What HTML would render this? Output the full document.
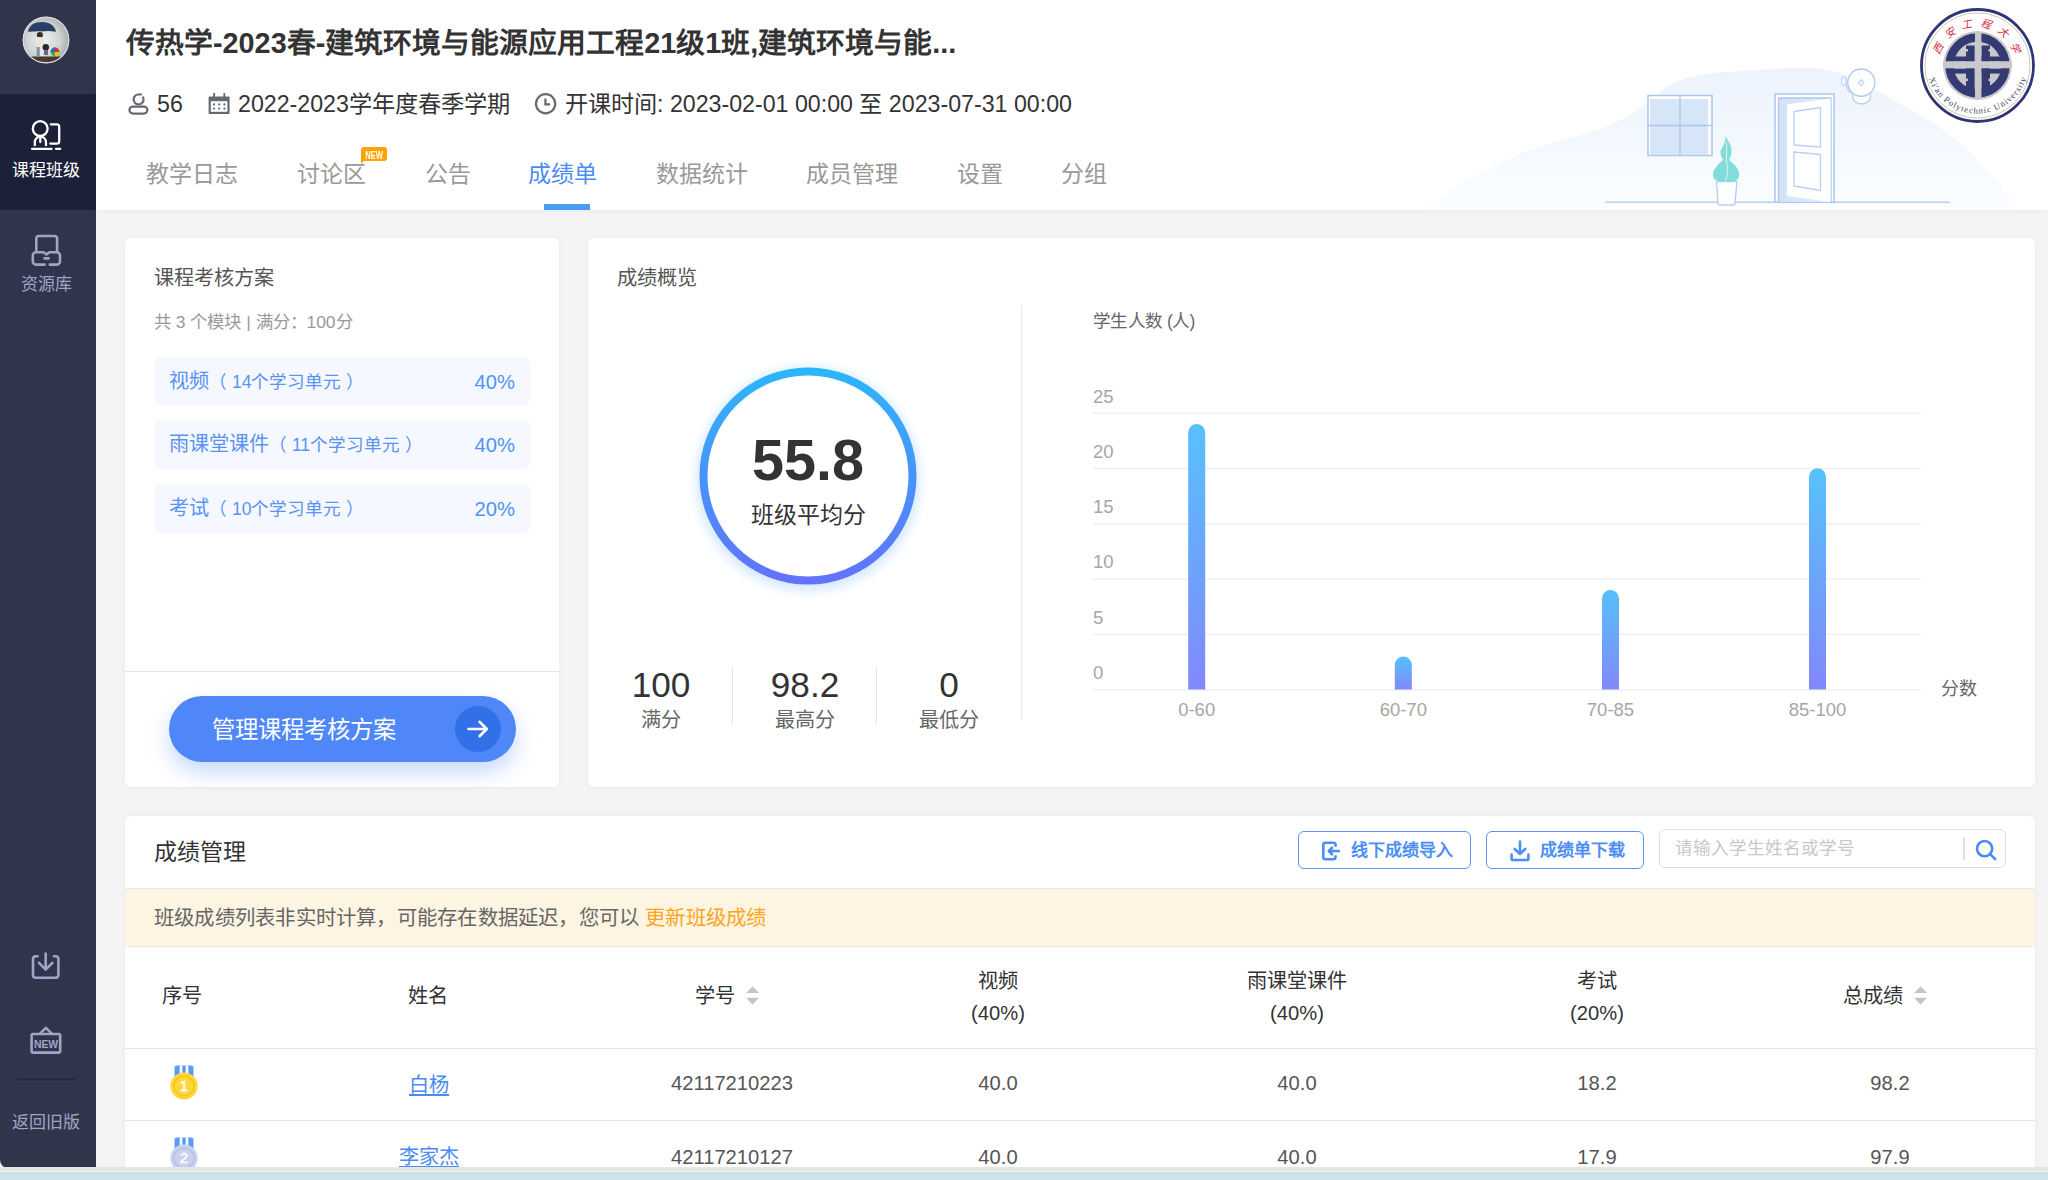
<!DOCTYPE html>
<html lang="zh-CN"><head><meta charset="utf-8">
<style>
*{margin:0;padding:0;box-sizing:border-box}
html,body{width:2048px;height:1180px;overflow:hidden;background:#cfe2ea;font-family:"Liberation Sans",sans-serif;color:#333}
.abs{position:absolute}
#page{position:absolute;left:0;top:0;width:2048px;height:1168px;background:#f4f4f4;overflow:hidden}
#bline{position:absolute;left:0;top:1167px;width:2048px;height:4px;background:#e6e6e6;border-bottom:1px solid #f3f3f3;box-sizing:content-box}
#side{position:absolute;left:0;top:0;width:96px;height:1168px;background:#31354b;border-bottom-left-radius:8px}
#header{position:absolute;left:96px;top:0;width:1952px;height:210px;background:#fff;box-shadow:0 2px 5px rgba(0,0,0,0.035)}
.card{position:absolute;background:#fff;border-radius:6px;box-shadow:0 0 6px rgba(0,0,0,0.045)}
.t{position:absolute;white-space:nowrap;line-height:1}

.row{position:absolute;left:29px;width:376px;height:49px;border-radius:6px;background:#f5f8fe;color:#5b93f5}
.rt{position:absolute;left:15px;top:14px;font-size:20.2px;line-height:1;white-space:nowrap}
.rt small{font-size:17.6px}
.rp{position:absolute;right:15px;top:14.5px;font-size:20.2px;line-height:1;color:#4f93f6}
.stat{position:absolute;top:429px;width:144px;text-align:center}
.sv{font-size:35.2px;line-height:1;color:#333}
.sl{font-size:20.2px;line-height:1;color:#666;margin-top:8px}

.ylab{font-size:18.5px;color:#a6a6a6}
.th{font-size:20.2px;color:#333}
.td{font-size:20.2px;color:#555}
.btn{border:1.5px solid #5b95f5;border-radius:6px;background:#fff}
.btnt{font-size:17px;font-weight:bold;color:#4d8ef5}
.tab{font-size:23px;color:#999}
</style></head><body>
<div id="page">
  <div id="side">
    <svg class="abs" style="left:21px;top:15px" width="50" height="50" viewBox="21 15 50 50">
      <defs>
        <radialGradient id="avbg" cx="0.45" cy="0.5" r="0.55"><stop offset="0" stop-color="#eef2f1"/><stop offset="0.6" stop-color="#cfd5d4"/><stop offset="1" stop-color="#9da4a6"/></radialGradient>
        <clipPath id="avc"><circle cx="46" cy="40" r="22.6"/></clipPath>
      </defs>
      <circle cx="46" cy="40" r="23.2" fill="#e4e6e8"/>
      <g clip-path="url(#avc)">
        <rect x="21" y="15" width="50" height="50" fill="url(#avbg)"/>
        <path d="M28 31.8 C29 25 35 22 42 22 C50 22 55 26 56 31.8 C53 31 50 31.6 47 31 C43 31.8 39 30.8 35 31.6 C32 31 30 31.8 28 31.8 Z" fill="#2a3f66"/>
        <path d="M42 31 V37" stroke="#555" stroke-width="0.6"/>
        <circle cx="39.8" cy="35" r="3" fill="#3b2c2a"/>
        <path d="M36 38 C37 36.5 42 36.5 44 38.5 L45 46 L43.5 47 V56 H36.5 Z" fill="#e9e5dc"/>
        <path d="M36.6 47 H39.8 V56 H36.6 Z" fill="#7f93a6"/>
        <circle cx="45.8" cy="47.2" r="3.2" fill="#2e2422"/>
        <path d="M44 50 H48 V55 H44 Z" fill="#5d6f8c"/>
        <circle cx="55" cy="52" r="4.4" fill="#3fae3a"/>
        <path d="M55 47.6 A4.4 4.4 0 0 1 59.4 52 H55 Z" fill="#e0312a"/>
        <path d="M50.6 52 A4.4 4.4 0 0 1 55 47.6 V52 Z" fill="#3560c8"/>
        <path d="M55 52 H59.4 A4.4 4.4 0 0 1 55 56.4 Z" fill="#f2c21b"/>
        <rect x="21" y="56.5" width="50" height="10" fill="#4a3a30"/>
      </g>
      <circle cx="46" cy="40" r="22.8" fill="none" stroke="#d9dcdc" stroke-width="1.2"/>
    </svg>
    <div class="abs" style="left:0;top:94px;width:96px;height:116px;background:#1d2039"></div>
    <svg class="abs" style="left:0;top:0" width="96" height="320" viewBox="0 0 96 320">
      <g fill="none" stroke="#fff" stroke-width="2.3" stroke-linecap="round">
        <circle cx="40.2" cy="128.6" r="7.4"/>
        <path d="M34.8 145.2 v-3 a5.6 5.6 0 0 1 11.2 0 v3"/>
        <path d="M40.3 138.5 v3.6"/>
        <path d="M50.8 124.3 H56.8 a2.4 2.4 0 0 1 2.4 2.4 V141.2 a2.4 2.4 0 0 1 -2.4 2.4 H50.3"/>
        <path d="M32 148.8 H51.6 M56 148.8 H60.2"/>
      </g>
      <g fill="none" stroke="#a0a5c7" stroke-width="2.6" stroke-linecap="round" stroke-linejoin="round">
        <path d="M36.3 251.6 V238.6 a2.6 2.6 0 0 1 2.6 -2.6 H54.5 a2.6 2.6 0 0 1 2.6 2.6 V251.6"/>
        <path d="M49.8 264.6 H56.8 a3.2 3.2 0 0 0 3.2 -3.2 V255.4 a3.2 3.2 0 0 0 -3.2 -3.2 H49.5 L46.5 254.4 L43.5 252.2 H36 a3.2 3.2 0 0 0 -3.2 3.2 V261.4 a3.2 3.2 0 0 0 3.2 3.2 H44.6"/>
        <path d="M44.6 258.4 H48.6"/>
      </g>
    </svg>
    <div class="t" style="left:6px;top:162px;width:80px;text-align:center;font-size:17px;color:#fff">课程班级</div>
    <div class="t" style="left:6px;top:276px;width:80px;text-align:center;font-size:17px;color:#a0a5c7">资源库</div>
    <svg class="abs" style="left:0;top:940px" width="96" height="150" viewBox="0 940 96 150">
      <g fill="none" stroke="#a0a5c7" stroke-width="2.6" stroke-linecap="round" stroke-linejoin="round">
        <path d="M37.5 956.2 H35.8 a2.8 2.8 0 0 0 -2.8 2.8 V975 a2.8 2.8 0 0 0 2.8 2.8 H55.6 a2.8 2.8 0 0 0 2.8 -2.8 V959 a2.8 2.8 0 0 0 -2.8 -2.8 H54"/>
        <path d="M45.7 953.6 V969.6 M39 962.8 L45.7 969.6 L52.4 962.8"/>
        <rect x="31.6" y="1034" width="28.6" height="18.6" rx="1.5"/>
        <path d="M40.3 1033.4 L45.9 1027.8 L51.5 1033.4"/>
      </g>
      <text x="46" y="1047.6" text-anchor="middle" font-family="Liberation Sans" font-weight="bold" font-size="10.4" fill="#a0a5c7">NEW</text>
      <path d="M17 1079.5 H75" stroke="#23273b" stroke-width="1.3"/>
    </svg>
    <div class="t" style="left:6px;top:1114px;width:80px;text-align:center;font-size:17px;color:#a0a5c7">返回旧版</div>

  </div>
  <div id="header">
    
  <svg class="abs" style="left:1304px;top:0" width="648" height="210" viewBox="1400 0 648 210">
    <defs>
      <linearGradient id="blob" x1="0" y1="0" x2="0" y2="1"><stop offset="0" stop-color="#ecf3fd"/><stop offset="1" stop-color="#fbfdff"/></linearGradient>
      <linearGradient id="doorsh" x1="0" y1="0" x2="1" y2="0"><stop offset="0" stop-color="#d3e2f8"/><stop offset="1" stop-color="#e3edfb"/></linearGradient>
    </defs>
    <path d="M1425 210 C1460 180 1520 150 1570 138 C1615 126 1640 112 1665 88 C1690 70 1740 72 1790 68 C1835 64 1860 80 1900 104 C1945 126 1985 160 2018 210 Z" fill="url(#blob)"/>
    <rect x="1648" y="95.5" width="64" height="60" fill="#fff" stroke="#abc6ef" stroke-width="1.5"/>
    <rect x="1650" y="99" width="58" height="56" fill="#d7e5f8"/>
    <path d="M1680 95.5 V155.5 M1648 125.5 H1712" stroke="#abc6ef" stroke-width="1.4"/>
    <path d="M1605 202.2 H1950" stroke="#b7cff1" stroke-width="1.6"/>
    <rect x="1775" y="94" width="59" height="108" fill="#fff" stroke="#abc6ef" stroke-width="1.5"/>
    <path d="M1778.5 202 V98 H1831 V202" fill="url(#doorsh)" stroke="#abc6ef" stroke-width="1.3"/>
    <path d="M1787 104.5 L1830.5 98.5 V202 L1787 196 Z" fill="#fff"/>
    <path d="M1794 111.5 L1820.5 107.5 V147 L1794 145 Z M1794 152 L1820.5 154.5 V190.5 L1794 186 Z" fill="#fff" stroke="#b9d0f2" stroke-width="1.3" stroke-linejoin="round"/>
    <path d="M1716.5 181.5 H1737 L1735 203 a2 2 0 0 1 -2 2 H1720 a2 2 0 0 1 -2 -2 Z" fill="#fff" stroke="#b7cff1" stroke-width="1.4"/>
    <path d="M1725.5 132 C1725 137 1728 140 1730 144 C1733 150 1731 156 1729 160 C1736 165 1740 171 1739 176 C1738 181 1734 182 1727 182 C1718 182 1713 180 1713 175 C1713 169 1718 165 1723 160 C1721 156 1719 152 1722 148 C1725 143 1726 138 1725.5 132 Z" fill="#80ddd7"/>
    <path d="M1726 141 C1728 150 1725 156 1727 165 C1729 172 1726 177 1725.5 182" fill="none" stroke="#e6f8f6" stroke-width="0.9"/>
    <ellipse cx="1861.6" cy="96.5" rx="9" ry="7.5" fill="#fff" stroke="#b9d0f2" stroke-width="1.3"/>
    <circle cx="1861.3" cy="82.6" r="13.6" fill="#fff" stroke="#b3caef" stroke-width="1.4"/>
    <path d="M1861.3 79.6 L1864 82.6 L1861.3 85.6 L1858.6 82.6 Z" fill="none" stroke="#b9d0f2" stroke-width="1.1"/>
    <path d="M1846 84 C1847 90 1850 93 1853 94" fill="none" stroke="#b9d0f2" stroke-width="1.2"/>
    <ellipse cx="1843.8" cy="81.3" rx="2.2" ry="4.2" fill="#fff" stroke="#b9d0f2" stroke-width="1.1"/>
  </svg>
  <svg class="abs" style="left:1820px;top:4px" width="124" height="124" viewBox="1916 4 124 124">
    <defs>
      <path id="arcTop" d="M1939 65.5 A38.5 38.5 0 0 1 2016 65.5"/>
      <path id="arcBot" d="M1926 62 A51.5 51.5 0 0 0 2029 62"/>
    </defs>
    <circle cx="1977.5" cy="65.5" r="56" fill="#fff" stroke="#2f3576" stroke-width="2.8"/>
    <circle cx="1977.5" cy="65.5" r="52.6" fill="none" stroke="#cfc8ad" stroke-width="1"/>
    <circle cx="1977.5" cy="65.5" r="34.4" fill="#c9c9cd"/>
    <circle cx="1977.5" cy="65.5" r="28" fill="none" stroke="#343a72" stroke-width="8.4"/>
    <rect x="1966" y="45.5" width="8.6" height="46" fill="#343a72"/>
    <rect x="1981.4" y="45.5" width="8.6" height="46" fill="#343a72"/>
    <rect x="1952" y="56.5" width="22" height="5" fill="#343a72"/>
    <rect x="1981" y="56.5" width="23" height="5" fill="#343a72"/>
    <rect x="1952" y="68.6" width="22" height="5" fill="#343a72"/>
    <rect x="1981" y="68.6" width="23" height="5" fill="#343a72"/>
    <path d="M1943 64.8 H2012" stroke="#c9c9cd" stroke-width="7"/>
    <path d="M1978.2 33 V98" stroke="#c9c9cd" stroke-width="6.4"/>
    <g fill="#c9c9cd"><rect x="1964.5" y="49" width="3.4" height="2.6"/><rect x="1964.5" y="78.5" width="3.4" height="2.6"/><rect x="1988.6" y="49" width="3.4" height="2.6"/><rect x="1988.6" y="78.5" width="3.4" height="2.6"/></g>
    <text font-family="Liberation Serif" font-size="10.5" fill="#d42b3b" font-style="italic" letter-spacing="7.6"><textPath href="#arcTop" startOffset="10">西安工程大学</textPath></text>
    <text font-family="Liberation Serif" font-size="8.6" fill="#3b3f5c" text-anchor="middle"><textPath href="#arcBot" startOffset="50%" textLength="128" lengthAdjust="spacing">Xi'an Polytechnic University</textPath></text>
  </svg>
    <div class="t" style="left:30px;top:29px;font-size:28.8px;font-weight:bold;color:#333">传热学-2023春-建筑环境与能源应用工程21级1班,建筑环境与能...</div>
    <svg class="abs" style="left:0;top:80px" width="150" height="50" viewBox="96 80 150 50">
      <g fill="none" stroke="#666a70" stroke-width="2.2">
        <path d="M142.70 96.53 A5.0 5.0 0 1 1 137.73 94.48 L141.73 94.28"/>
        <rect x="129.4" y="106.6" width="18" height="7" rx="3.5"/>
      </g>
      <g fill="#666a70">
        <rect x="208.6" y="96.4" width="21" height="17.6" rx="1"/>
      </g>
      <rect x="210.8" y="101.2" width="16.6" height="10.6" fill="#fff"/>
      <g fill="#666a70">
        <rect x="213.2" y="93" width="1.8" height="5.2"/><rect x="223.4" y="93" width="1.8" height="5.2"/>
        <circle cx="214" cy="104.4" r="1.1"/><circle cx="219.2" cy="104.4" r="1.1"/><circle cx="224.4" cy="104.4" r="1.1"/>
        <circle cx="214" cy="108.6" r="1.1"/><circle cx="219.2" cy="108.6" r="1.1"/><circle cx="224.4" cy="108.6" r="1.1"/>
      </g>
    </svg>
    <div class="t" style="left:61px;top:93px;font-size:23.2px;color:#333">56</div>
    <div class="t" style="left:142px;top:93px;font-size:23.2px;color:#333">2022-2023学年度春季学期</div>
    <svg class="abs" style="left:438px;top:92px" width="24" height="24" viewBox="0 0 24 24">
      <circle cx="11.6" cy="11.8" r="9.6" fill="none" stroke="#666a70" stroke-width="2.2"/>
      <path d="M11.4 6.6 V12.4 H16" fill="none" stroke="#666a70" stroke-width="2.2"/>
    </svg>
    <div class="t" style="left:469px;top:93px;font-size:23.2px;color:#333">开课时间: 2023-02-01 00:00 至 2023-07-31 00:00</div>
    <div class="t tab" style="left:50px;top:162.5px">教学日志</div>
    <div class="t tab" style="left:201px;top:162.5px">讨论区</div>
    <div class="abs" style="left:265px;top:147px;width:26px;height:14px;background:#ffa400;border-radius:3px"></div>
    <svg class="abs" style="left:264px;top:158px" width="10" height="8" viewBox="0 0 10 8"><path d="M1 0 V6.2 L6 0 Z" fill="#ffa400"/></svg>
    <div class="t" style="left:265px;top:150px;width:26px;text-align:center;font-size:10.5px;font-weight:bold;color:#fff;transform:scaleX(0.72);letter-spacing:0">NEW</div>
    <div class="t tab" style="left:329px;top:162.5px">公告</div>
    <div class="t tab" style="left:432px;top:162.5px;color:#4c8cf6">成绩单</div>
    <div class="abs" style="left:448px;top:204px;width:46px;height:6px;background:#4b9bf5"></div>
    <div class="t tab" style="left:560px;top:162.5px">数据统计</div>
    <div class="t tab" style="left:710px;top:162.5px">成员管理</div>
    <div class="t tab" style="left:861px;top:162.5px">设置</div>
    <div class="t tab" style="left:965px;top:162.5px">分组</div>
  </div>

  <!-- card 1 -->
  <div class="card" style="left:125px;top:238px;width:434px;height:549px">
    <div class="t" style="left:29px;top:30px;font-size:20.2px;color:#555">课程考核方案</div>
    <div class="t" style="left:29px;top:76px;font-size:17.4px;color:#999">共 3 个模块 | 满分：100分</div>
    <div class="row" style="top:119px"><span class="rt">视频<small>（ 14个学习单元 ）</small></span><span class="rp">40%</span></div>
    <div class="row" style="top:182px"><span class="rt">雨课堂课件<small>（ 11个学习单元 ）</small></span><span class="rp">40%</span></div>
    <div class="row" style="top:246px"><span class="rt">考试<small>（ 10个学习单元 ）</small></span><span class="rp">20%</span></div>
    <div class="abs" style="left:0;top:433px;width:434px;height:1px;background:#e4e4e4"></div>
    <div class="abs" style="left:44px;top:458px;width:347px;height:66px;border-radius:33px;background:#4f87f8;box-shadow:0 10px 22px rgba(79,134,247,0.32)">
      <div class="t" style="left:43px;top:22.5px;font-size:23.4px;color:#fff">管理课程考核方案</div>
      <div class="abs" style="left:286px;top:10px;width:46px;height:46px;border-radius:50%;background:#3270e8"></div>
      <svg class="abs" style="left:286px;top:10px" width="46" height="46" viewBox="0 0 46 46"><path d="M13.5 23 H31.5 M24.5 15.8 L31.8 23 L24.5 30.2" fill="none" stroke="#fff" stroke-width="2.6" stroke-linecap="round" stroke-linejoin="round"/></svg>
    </div>
  </div>
  <!-- card 2 -->
  <div class="card" style="left:588px;top:238px;width:1447px;height:549px">
    <div class="t" style="left:29px;top:30px;font-size:20.2px;color:#555">成绩概览</div>
    <div class="abs" style="left:433px;top:67px;width:1px;height:415px;background:#e8e8e8"></div>
    <svg class="abs" style="left:80px;top:98px" width="280" height="280" viewBox="-20 -20 280 280">
      <defs><linearGradient id="ring" x1="0" y1="0" x2="0" y2="1"><stop offset="0" stop-color="#2db5fb"/><stop offset="1" stop-color="#6273fb"/></linearGradient>
      <filter id="glow" x="-30%" y="-30%" width="160%" height="160%"><feGaussianBlur stdDeviation="5.5"/></filter></defs>
      <circle cx="120" cy="123" r="106" fill="none" stroke="#bfe0fd" stroke-width="10" filter="url(#glow)" opacity="0.85"/>
      <circle cx="120" cy="120" r="104.5" fill="#fff" stroke="url(#ring)" stroke-width="8"/>
    </svg>
    <div class="t" style="left:100px;top:194px;width:240px;text-align:center;font-size:57.6px;font-weight:bold;color:#333">55.8</div>
    <div class="t" style="left:100px;top:266px;width:240px;text-align:center;font-size:23px;color:#333">班级平均分</div>
    <div class="stat" style="left:1px"><div class="sv">100</div><div class="sl">满分</div></div>
    <div class="abs" style="left:144px;top:429px;width:1px;height:57px;background:#e6e6e6"></div>
    <div class="stat" style="left:145px"><div class="sv">98.2</div><div class="sl">最高分</div></div>
    <div class="abs" style="left:288px;top:429px;width:1px;height:57px;background:#e6e6e6"></div>
    <div class="stat" style="left:289px"><div class="sv">0</div><div class="sl">最低分</div></div>
    <div class="t" style="left:505px;top:75px;font-size:17.6px;letter-spacing:-0.6px;color:#666">学生人数 (人)</div>
  </div>
  <!-- card 3 -->
  <div class="card" style="left:125px;top:816px;width:1910px;height:400px;border-radius:6px 6px 0 0">
    <div class="t" style="left:29px;top:25px;font-size:23px;color:#333">成绩管理</div>
    <div class="abs" style="left:0;top:72px;width:1910px;height:1px;background:#e8e8e8"></div>
    <div class="abs" style="left:0;top:73px;width:1910px;height:57px;background:#fdf4e2"></div>
    <div class="abs" style="left:0;top:130px;width:1910px;height:1px;background:#e8e8e8"></div>
    <div class="t" style="left:29px;top:92px;font-size:20.4px;letter-spacing:0.22px;color:#666">班级成绩列表非实时计算，可能存在数据延迟，您可以 <span style="color:#fda51a">更新班级成绩</span></div>
    <div class="abs" style="left:0;top:232px;width:1910px;height:1px;background:#e4e4e4"></div>
    <div class="abs" style="left:0;top:304px;width:1910px;height:1px;background:#e4e4e4"></div>
  </div>
<svg class="abs" style="left:1060px;top:370px" width="960" height="370" viewBox="1060 370 960 370">
<defs><linearGradient id="bar" x1="0" y1="0" x2="0" y2="1"><stop offset="0" stop-color="#56c1fc"/><stop offset="1" stop-color="#8288fb"/></linearGradient></defs>
<rect x="1093" y="412.5" width="828" height="1.4" fill="#eeeff5"/>
<rect x="1093" y="467.9" width="828" height="1.4" fill="#eeeff5"/>
<rect x="1093" y="523.1" width="828" height="1.4" fill="#eeeff5"/>
<rect x="1093" y="578.3" width="828" height="1.4" fill="#eeeff5"/>
<rect x="1093" y="633.7" width="828" height="1.4" fill="#eeeff5"/>
<rect x="1093" y="689.1" width="828" height="1.4" fill="#eeeff5"/>
<path d="M1188.2 689.6 V432.564 a8.5 8.5 0 0 1 17 0 V689.6 Z" fill="url(#bar)"/>
<path d="M1394.8 689.6 V664.908 a8.5 8.5 0 0 1 17 0 V689.6 Z" fill="url(#bar)"/>
<path d="M1602.0 689.6 V598.524 a8.5 8.5 0 0 1 17 0 V689.6 Z" fill="url(#bar)"/>
<path d="M1809.0 689.6 V476.82000000000005 a8.5 8.5 0 0 1 17 0 V689.6 Z" fill="url(#bar)"/>
</svg>
<div class="t ylab" style="left:1093px;top:387.5px">25</div>
<div class="t ylab" style="left:1093px;top:442.9px">20</div>
<div class="t ylab" style="left:1093px;top:498.1px">15</div>
<div class="t ylab" style="left:1093px;top:553.3px">10</div>
<div class="t ylab" style="left:1093px;top:608.7px">5</div>
<div class="t ylab" style="left:1093px;top:664.1px">0</div>
<div class="t ylab" style="left:1136.7px;top:701px;width:120px;text-align:center">0-60</div>
<div class="t ylab" style="left:1343.3px;top:701px;width:120px;text-align:center">60-70</div>
<div class="t ylab" style="left:1550.5px;top:701px;width:120px;text-align:center">70-85</div>
<div class="t ylab" style="left:1757.5px;top:701px;width:120px;text-align:center">85-100</div>
<div class="t" style="left:1941px;top:680px;font-size:18px;color:#666">分数</div>

<div class="t th" style="left:162px;top:986px">序号</div>
<div class="t th" style="left:408px;top:986px">姓名</div>
<div class="t th" style="left:695px;top:986px">学号</div>
<svg class="abs" style="left:744px;top:984px" width="18" height="24" viewBox="0 0 18 24"><path d="M2 9 L8.6 2.4 L15.2 9 Z M2 13.8 L8.6 20.4 L15.2 13.8 Z" fill="#c0c4cc"/></svg>
<div class="t th" style="left:898px;top:965px;width:200px;text-align:center;line-height:32px">视频<br>(40%)</div>
<div class="t th" style="left:1197px;top:965px;width:200px;text-align:center;line-height:32px">雨课堂课件<br>(40%)</div>
<div class="t th" style="left:1497px;top:965px;width:200px;text-align:center;line-height:32px">考试<br>(20%)</div>
<div class="t th" style="left:1843px;top:986px">总成绩</div>
<svg class="abs" style="left:1912px;top:984px" width="18" height="24" viewBox="0 0 18 24"><path d="M2 9 L8.6 2.4 L15.2 9 Z M2 13.8 L8.6 20.4 L15.2 13.8 Z" fill="#c0c4cc"/></svg>
<svg class="abs" style="left:167.7px;top:1064.4px" width="32" height="38" viewBox="167.7 1064.4 32 38">
<path d="M174.2 1078.4 V1067.9 a2 2 0 0 1 2 -2 H191.2 a2 2 0 0 1 2 2 V1078.4 Z" fill="#5b9bf6"/>
<rect x="179.39999999999998" y="1065.9" width="2.6" height="12" fill="#fff"/><rect x="185.39999999999998" y="1065.9" width="2.6" height="12" fill="#fff"/>
<circle cx="183.7" cy="1086.4" r="13.6" fill="#ffd53d"/>
<circle cx="183.7" cy="1086.4" r="10" fill="none" stroke="#f7c31a" stroke-width="1.4"/>
<text x="183.7" y="1091.8" text-anchor="middle" font-family="Liberation Sans" font-size="15" stroke="#fff" stroke-width="0.5" fill="#fff">1</text>
</svg>
<svg class="abs" style="left:167.7px;top:1136px" width="32" height="38" viewBox="167.7 1136 32 38">
<path d="M174.2 1150 V1139.5 a2 2 0 0 1 2 -2 H191.2 a2 2 0 0 1 2 2 V1150 Z" fill="#5b9bf6"/>
<rect x="179.39999999999998" y="1137.5" width="2.6" height="12" fill="#fff"/><rect x="185.39999999999998" y="1137.5" width="2.6" height="12" fill="#fff"/>
<circle cx="183.7" cy="1158" r="13.6" fill="#c9d1ef"/>
<circle cx="183.7" cy="1158" r="10" fill="none" stroke="#b7c0e6" stroke-width="1.4"/>
<text x="183.7" y="1163.4" text-anchor="middle" font-family="Liberation Sans" font-size="15" stroke="#fff" stroke-width="0.5" fill="#fff">2</text>
</svg>
<div class="t td" style="left:329px;top:1075px;width:200px;text-align:center"><span style="color:#4a8af4;text-decoration:underline">白杨</span></div>
<div class="t td" style="left:632px;top:1073px;width:200px;text-align:center">42117210223</div>
<div class="t td" style="left:898px;top:1073px;width:200px;text-align:center">40.0</div>
<div class="t td" style="left:1197px;top:1073px;width:200px;text-align:center">40.0</div>
<div class="t td" style="left:1497px;top:1073px;width:200px;text-align:center">18.2</div>
<div class="t td" style="left:1790px;top:1073px;width:200px;text-align:center">98.2</div>
<div class="t td" style="left:329px;top:1147px;width:200px;text-align:center"><span style="color:#4a8af4;text-decoration:underline">李家杰</span></div>
<div class="t td" style="left:632px;top:1147px;width:200px;text-align:center">42117210127</div>
<div class="t td" style="left:898px;top:1147px;width:200px;text-align:center">40.0</div>
<div class="t td" style="left:1197px;top:1147px;width:200px;text-align:center">40.0</div>
<div class="t td" style="left:1497px;top:1147px;width:200px;text-align:center">17.9</div>
<div class="t td" style="left:1790px;top:1147px;width:200px;text-align:center">97.9</div>

<div class="abs btn" style="left:1298px;top:831px;width:173px;height:38px"></div>
<svg class="abs" style="left:1318px;top:838px" width="26" height="26" viewBox="0 0 26 26"><path d="M15.5 4.8 H7.3 a2 2 0 0 0 -2 2 V19.2 a2 2 0 0 0 2 2 H15.5 a2 2 0 0 0 2 -2 V17.2 M17.5 8.8 V6.8 a2 2 0 0 0 -2 -2" fill="none" stroke="#4d8ef5" stroke-width="2.6"/><path d="M22 13 H11 M14.8 9 L10.8 13 L14.8 17" fill="none" stroke="#4d8ef5" stroke-width="2.6" stroke-linejoin="round"/></svg>
<div class="t btnt" style="left:1351px;top:842px">线下成绩导入</div>
<div class="abs btn" style="left:1486px;top:831px;width:158px;height:38px"></div>
<svg class="abs" style="left:1507px;top:838px" width="26" height="26" viewBox="0 0 26 26"><path d="M13 3.6 V16 M7.8 11 L13 16.2 L18.2 11 M4.6 16.6 V20.4 a1.6 1.6 0 0 0 1.6 1.6 H19.8 a1.6 1.6 0 0 0 1.6 -1.6 V16.6" fill="none" stroke="#4d8ef5" stroke-width="2.6" stroke-linecap="round" stroke-linejoin="round"/></svg>
<div class="t btnt" style="left:1540px;top:842px">成绩单下载</div>
<div class="abs" style="left:1659px;top:829px;width:347px;height:39px;border:1.5px solid #e0e0e0;border-radius:6px;background:#fff"></div>
<div class="t" style="left:1675px;top:840px;font-size:17.6px;color:#c8c8c8">请输入学生姓名或学号</div>
<div class="abs" style="left:1963px;top:837px;width:1.5px;height:23px;background:#e0e0e0"></div>
<svg class="abs" style="left:1972px;top:836px" width="28" height="28" viewBox="0 0 28 28"><circle cx="12.6" cy="12.6" r="7.6" fill="none" stroke="#4a8af4" stroke-width="2.6"/><path d="M18.2 18.2 L23.2 23.2" stroke="#4a8af4" stroke-width="2.6" stroke-linecap="round"/></svg>
</div>
<div id="bline"></div>
</body></html>
